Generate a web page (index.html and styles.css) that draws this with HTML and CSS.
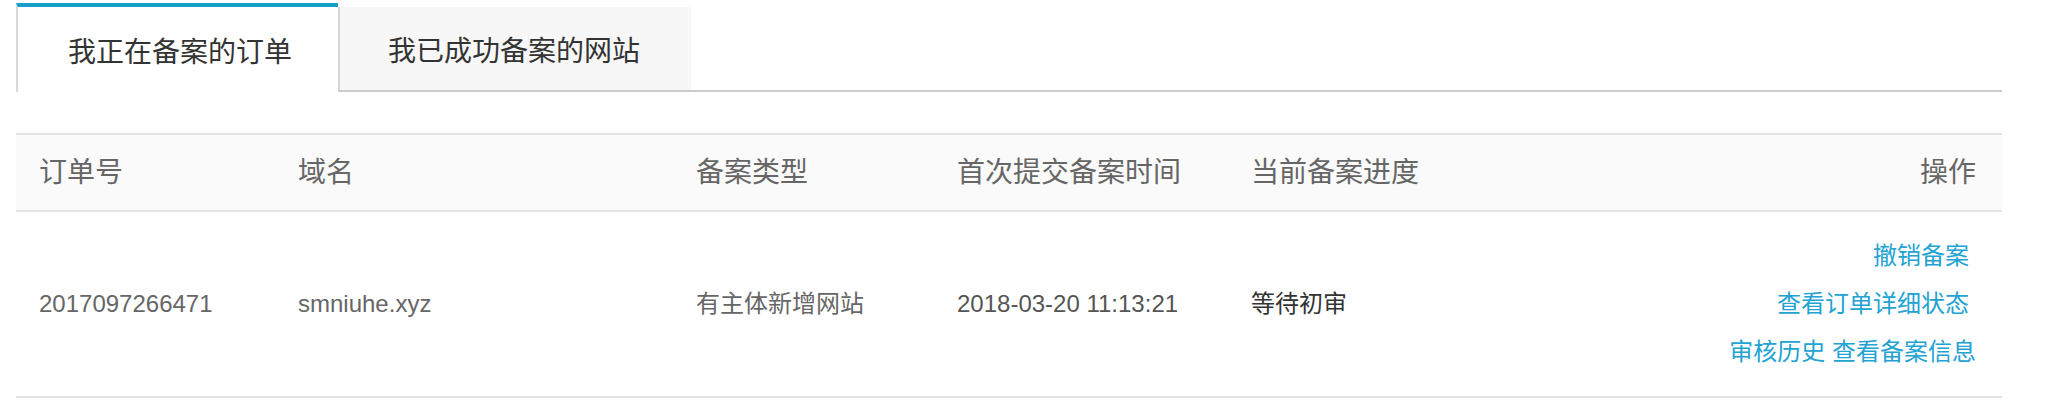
FILE: index.html
```html
<!DOCTYPE html>
<html lang="zh-CN">
<head>
<meta charset="utf-8">
<title>备案订单</title>
<link rel="stylesheet" href="styles.css">
</head>
<body>
<div class="page">
  <div class="tabs">
    <div class="tab tab-active">我正在备案的订单</div>
    <div class="tab">我已成功备案的网站</div>
  </div>
  <table class="orders">
    <colgroup>
      <col class="c1"><col class="c2"><col class="c3"><col class="c4"><col class="c5"><col class="c6">
    </colgroup>
    <thead>
      <tr>
        <th>订单号</th>
        <th>域名</th>
        <th>备案类型</th>
        <th>首次提交备案时间</th>
        <th>当前备案进度</th>
        <th class="right">操作</th>
      </tr>
    </thead>
    <tbody>
      <tr>
        <td>2017097266471</td>
        <td>smniuhe.xyz</td>
        <td>有主体新增网站</td>
        <td class="date">2018-03-20 11:13:21</td>
        <td class="status">等待初审</td>
        <td class="right">
          <div class="actions">
            <a class="link pad" href="#">撤销备案</a>
            <a class="link pad" href="#">查看订单详细状态</a>
            <span class="line"><a class="link" href="#">审核历史</a> <a class="link" href="#">查看备案信息</a></span>
          </div>
        </td>
      </tr>
    </tbody>
  </table>
</div>
</body>
</html>
```
FILE: styles.css
```css
html, body {
  margin: 0;
  padding: 0;
  background: #ffffff;
}
body {
  font-family: "Liberation Sans", "Noto Sans CJK SC", sans-serif;
  color: #333;
}
.page {
  padding: 3px 54px 0 16px;
}
.tabs {
  display: flex;
  align-items: flex-end;
  border-bottom: 2px solid #cccccc;
}
.tab {
  box-sizing: border-box;
  height: 83px;
  padding: 0 51px 0 48px;
  display: flex;
  align-items: center;
  font-size: 28px;
  color: #333;
  background: #f7f7f7;
  border-left: 2px solid #d6d6d6;
  white-space: nowrap;
}
.tab-active {
  height: 89px;
  margin-bottom: -2px;
  padding: 0 46px 0 50px;
  background: #ffffff;
  border-top: 4px solid #14a0c8;
  border-left: 2px solid #d9d9d9;
}
.orders {
  margin-top: 41px;
  width: 100%;
  border-collapse: collapse;
  table-layout: fixed;
}
.c1 { width: 259px; }
.c2 { width: 398px; }
.c3 { width: 261px; }
.c4 { width: 294px; }
.c5 { width: 400px; }
.orders th {
  height: 75px;
  padding: 0 0 0 23px;
  background: #fafafa;
  border-top: 2px solid #e3e3e3;
  border-bottom: 2px solid #e3e3e3;
  font-size: 28px;
  font-weight: normal;
  color: #666;
  text-align: left;
  white-space: nowrap;
  line-height: 40px;
}
.orders td {
  padding: 20px 0 20px 23px;
  border-bottom: 2px solid #e3e3e3;
  font-size: 24px;
  color: #666;
  vertical-align: middle;
  white-space: nowrap;
  line-height: 40px;
}
.orders th.right,
.orders td.right {
  text-align: right;
  padding-right: 26px;
}
.orders td.date { color: #555; }
.orders td.status { color: #333; }
.actions {
  display: flex;
  flex-direction: column;
  align-items: flex-end;
}
.link {
  color: #22a3d3;
  text-decoration: none;
  line-height: 48px;
}
.link.pad {
  padding-right: 7px;
}
.line {
  line-height: 48px;
}
```
